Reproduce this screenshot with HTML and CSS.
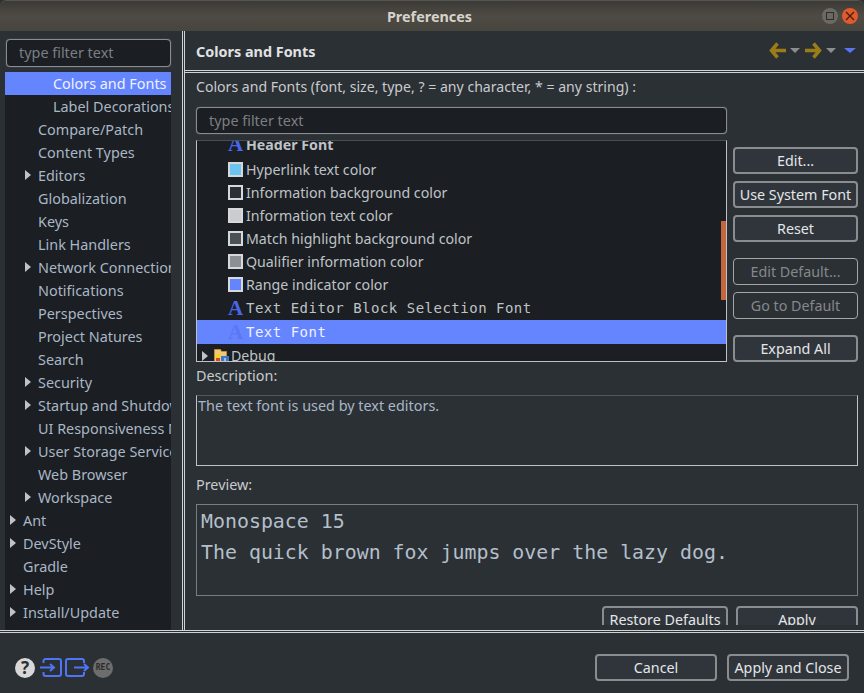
FILE: index.html
```html
<!DOCTYPE html>
<html>
	<head>
		<meta charset="utf-8" />
		<title>Preferences</title>
		<link rel="stylesheet" href="styles.css">
	</head>
	<body>
		<div class="window">
			<div class="titlebar">
				<span class="title">Preferences</span>
				<span class="win-btn win-max"><i></i></span>
				<span class="win-btn win-close">
					<svg width="10" height="10" viewBox="0 0 10 10"><path d="M1 1L9 9M9 1L1 9" stroke="#3a2018" stroke-width="1.3"/></svg>
				</span>
			</div>
			<div class="main">
				<div class="side">
					<div class="filter side-filter">type filter text</div>
					<div class="tree">
						<div class="node lv2 sel">Colors and Fonts</div>
						<div class="node lv2">Label Decorations</div>
						<div class="node lv1">Compare/Patch</div>
						<div class="node lv1">Content Types</div>
						<div class="node lv1 arrow">Editors</div>
						<div class="node lv1">Globalization</div>
						<div class="node lv1">Keys</div>
						<div class="node lv1">Link Handlers</div>
						<div class="node lv1 arrow">Network Connections</div>
						<div class="node lv1">Notifications</div>
						<div class="node lv1">Perspectives</div>
						<div class="node lv1">Project Natures</div>
						<div class="node lv1">Search</div>
						<div class="node lv1 arrow">Security</div>
						<div class="node lv1 arrow">Startup and Shutdown</div>
						<div class="node lv1">UI Responsiveness Monitoring</div>
						<div class="node lv1 arrow">User Storage Service</div>
						<div class="node lv1">Web Browser</div>
						<div class="node lv1 arrow">Workspace</div>
						<div class="node lv0 arrow">Ant</div>
						<div class="node lv0 arrow">DevStyle</div>
						<div class="node lv0">Gradle</div>
						<div class="node lv0 arrow">Help</div>
						<div class="node lv0 arrow">Install/Update</div>
					</div>
				</div>
				<div class="page">
					<div class="page-head">
						<b>Colors and Fonts</b>
						<div class="nav">
							<svg width="17" height="17" viewBox="0 0 17 17"><path d="M8.500 1.500L2.500 8.500l6 7M3.500 8.500H17" fill="none" stroke="#9a7d17" stroke-width="3.500"/></svg>
							<i class="tri"></i>
							<svg width="17" height="17" viewBox="0 0 17 17"><path d="M8.500 1.500L14.500 8.500l-6 7M13.500 8.500H0" fill="none" stroke="#9a7d17" stroke-width="3.500"/></svg>
							<i class="tri"></i>
							<i class="tri blue"></i>
						</div>
					</div>
					<div class="page-body">
						<div class="caption">Colors and Fonts (font, size, type, ? = any character, * = any string) :</div>
						<div class="theme-row">
							<div class="theme-left">
								<div class="filter list-filter">type filter text</div>
								<div class="list">
									<div class="row row-cut"><span class="aa">A</span><b>Header Font</b></div>
									<div class="row"><i class="swatch" style="background:#6cc5f0"></i>Hyperlink text color</div>
									<div class="row"><i class="swatch" style="background:#2b3035"></i>Information background color</div>
									<div class="row"><i class="swatch" style="background:#c9ccd0"></i>Information text color</div>
									<div class="row"><i class="swatch" style="background:#4a5157"></i>Match highlight background color</div>
									<div class="row"><i class="swatch" style="background:#8a9096"></i>Qualifier information color</div>
									<div class="row"><i class="swatch" style="background:#6585ff"></i>Range indicator color</div>
									<div class="row mono"><span class="aa">A</span>Text Editor Block Selection Font</div>
									<div class="row mono cur"><span class="aa">A</span>Text Font</div>
									<div class="row debug"><i class="arrow-ic"></i><svg width="16" height="16" viewBox="0 0 16 16"><path d="M1.500 1.500h6l1 2h5v11h-12z" fill="#f0c878" stroke="#c08a3c"/><rect x="3" y="6" width="4" height="4" fill="#f2d21e"/><rect x="3" y="10" width="4" height="4" fill="#d8452c"/><rect x="8" y="8" width="8" height="8" fill="#3a78c8"/><path d="M12 10v4" stroke="#fff"/></svg><span>Debug</span></div>
									<div class="scroll-mark"></div>
								</div>
							</div>
							<div class="btns">
								<div class="btn">Edit...</div>
								<div class="btn">Use System Font</div>
								<div class="btn">Reset</div>
								<div class="btn off gap-top">Edit Default...</div>
								<div class="btn off">Go to Default</div>
								<div class="btn gap-top btn-last">Expand All</div>
							</div>
						</div>
						<div class="label label-desc">Description:</div>
						<div class="box desc">The text font is used by text editors.</div>
						<div class="label">Preview:</div>
						<div class="box preview">Monospace 15<br>The quick brown fox jumps over the lazy dog.</div>
						<div class="page-btns">
							<div class="btn btn-restore">Restore Defaults</div>
							<div class="btn">Apply</div>
						</div>
					</div>
				</div>
			</div>
			<div class="footer">
				<div class="foot-icons">
					<span class="help">?</span>
					<svg class="ic-in" width="22" height="19" viewBox="0 0 22 19"><path d="M3.500 5V3a2 2 0 0 1 2-2h13.500a2 2 0 0 1 2 2v13a2 2 0 0 1-2 2H5.500a2 2 0 0 1-2-2v-2M0 9.500h13M10 6l4 3.500-4 3.500" fill="none" stroke="#4f74f5" stroke-width="2"/></svg>
					<svg class="ic-out" width="24" height="19" viewBox="0 0 24 19"><path d="M19 5V3a2 2 0 0 0-2-2H3a2 2 0 0 0-2 2v13a2 2 0 0 0 2 2h14a2 2 0 0 0 2-2v-2M9 9.500h13M19 6l4 3.500-4 3.500" fill="none" stroke="#4f74f5" stroke-width="2"/></svg>
					<span class="rec">REC</span>
				</div>
				<div class="foot-btns">
					<div class="btn">Cancel</div>
					<div class="btn">Apply and Close</div>
				</div>
			</div>
		</div>
	</body>
</html>
```

FILE: styles.css
```css
html, body{
	margin: 0;
	height: 100%;
	background: #2b3035;
}
body{
	font: 14.400px "Noto Sans", sans-serif;
	color: #bfc3c7;
	overflow: hidden;
}
.window{
	display: flex;
	flex-direction: column;
	height: 693px;
}
.titlebar{
	height: 31px;
	flex: none;
	display: flex;
	align-items: center;
	justify-content: flex-end;
	gap: 4px;
	padding-right: 6px;
	position: relative;
	background: linear-gradient(#3c3a36, #4e4b44 50%, #47453f);
	border-top: 1px solid #55534d;
	box-sizing: border-box;
	border-radius: 6px 6px 0 0;
}
.title{
	position: absolute;
	left: 0;
	right: 5px;
	text-align: center;
	font-weight: bold;
	color: #d6d3cc;
}
.win-btn{
	width: 16px;
	height: 16px;
	border-radius: 50%;
	display: flex;
	align-items: center;
	justify-content: center;
	position: relative;
}
.win-max{
	background: #6a6963;
}
.win-max i{
	width: 6px;
	height: 6px;
	border: 1px solid #2e2d2a;
}
.win-close{
	background: #e25a2a;
}

.main{
	height: 599px;
	flex: none;
	display: flex;
	border-bottom: 3px double #d0d2d4;
}
.side{
	width: 185px;
	flex: none;
	box-sizing: border-box;
	padding: 8px 0 0 5px;
	border-right: 3px double #d0d2d4;
	overflow: hidden;
}
.filter{
	box-sizing: border-box;
	height: 28px;
	line-height: 25px;
	background: #1b1e22;
	border: 1px solid #8a8d90;
	border-radius: 4px;
	box-shadow: 0 0 1px #8a8d90;
	color: #7b7f83;
	padding-left: 12px;
}
.side-filter{
	width: 165px;
	margin-left: 1px;
}
.tree{
	width: 166px;
	height: 600px;
	margin-top: 5px;
	background: #1b1e22;
	overflow: hidden;
}
.node{
	height: 23px;
	line-height: 23px;
	white-space: nowrap;
	position: relative;
	color: #a9b7c6;
}
.lv0{ padding-left: 18px; }
.lv1{ padding-left: 33px; }
.lv2{ padding-left: 48px; }
.sel{
	background: #6585ff;
	color: #eef1ff;
}
.arrow:before, .arrow-ic{
	content: "";
	position: absolute;
	width: 0;
	height: 0;
	border-left: 6px solid #bfc3c7;
	border-top: 5px solid transparent;
	border-bottom: 5px solid transparent;
	top: 6px;
	left: 20px;
}
.lv0.arrow:before{
	left: 5px;
}

.page{
	flex: 1;
	min-width: 0;
}
.page-head{
	height: 42px;
	box-sizing: border-box;
	padding: 0 8px 0 11px;
	display: flex;
	align-items: center;
	justify-content: space-between;
	border-bottom: 3px double #d0d2d4;
	color: #e0e2e4;
}
.page-head b{
	margin-top: 1px;
}
.nav{
	display: flex;
	align-items: center;
}
.tri{
	width: 0;
	height: 0;
	border-left: 5px solid transparent;
	border-right: 5px solid transparent;
	border-top: 5px solid #8b8d8f;
	margin: 0 5px 0 4px;
}
.tri.blue{
	border-left-width: 6px;
	border-right-width: 6px;
	border-top-color: #5b74f0;
	margin: 0 0 0 3px;
}
.page-body{
	padding: 0 6px 0 11px;
}
.caption{
	height: 34px;
	line-height: 28px;
	font-size: 14.100px;
	color: #c8cbce;
	white-space: nowrap;
}
.theme-row{
	display: flex;
	gap: 6px;
}
.theme-left{
	width: 531px;
	flex: none;
}
.list-filter{
	height: 27px;
	margin-bottom: 6px;
}
.list{
	height: 222px;
	background: #1b1e22;
	border: 1px solid #c0c3c6;
	border-top-color: #4a4e52;
	box-sizing: border-box;
	overflow: hidden;
	position: relative;
	font-size: 14.200px;
}
.row{
	box-sizing: border-box;
	height: 23px;
	line-height: 21px;
	padding: 0 0 2px 31px;
	display: flex;
	align-items: center;
	white-space: nowrap;
	color: #bfc3c7;
}
.row-cut{
	margin-top: -7px;
	margin-bottom: 2px;
}
.swatch{
	box-sizing: border-box;
	width: 15px;
	height: 15px;
	border: 2px solid #d6d8da;
	margin-right: 3px;
	flex: none;
}
.aa{
	width: 18px;
	flex: none;
	font: bold 21px "Liberation Serif", serif;
	color: #4a66e8;
}
.mono{
	font-family: "DejaVu Sans Mono", monospace;
	font-size: 14px;
	letter-spacing: .5px;
	padding-bottom: 0;
}
.cur{
	height: 24px;
	background: #6585ff;
	color: #eef1ff;
}
.cur .aa{
	color: #5a78f5;
}
.debug{
	padding: 0 0 0 5px;
	position: relative;
}
.debug svg{
	margin: 0 2px 0 5px;
}
.arrow-ic{
	position: static;
	margin-right: 0;
}
.scroll-mark{
	position: absolute;
	right: 0;
	top: 80px;
	width: 5px;
	height: 79px;
	background: #c2673f;
}
.btns{
	padding-top: 40px;
	width: 125px;
	flex: none;
}
.btn{
	box-sizing: border-box;
	height: 27px;
	line-height: 23px;
	margin-bottom: 7px;
	text-align: center;
	border: 2px solid #8a8d90;
	border-radius: 4px;
	background: #2f353b;
	color: #e4e6e8;
	white-space: nowrap;
	font-size: 14.300px;
}
.btn.off{
	border: 1px solid #a4a7aa;
	line-height: 25px;
	color: #85888b;
	background: #2b3035;
}
.gap-top{
	margin-top: 16px;
}
.btn-last{
	margin-bottom: 0;
}
.label{
	height: 38px;
	line-height: 38px;
	color: #c8cbce;
}
.label-desc{
	height: 33px;
	line-height: 28px;
}
.box{
	width: 662px;
	box-sizing: border-box;
	border: 1px solid #c0c3c6;
	border-top-color: #55585b;
	background: #2b3035;
}
.desc{
	height: 71px;
	padding: 0 0 0 1px;
	line-height: 20px;
	color: #a9b7c6;
}
.preview{
	height: 92px;
	padding: 1px 4px;
	border-color: #7a7d80;
	font: 19.900px/31px "DejaVu Sans Mono", monospace;
	color: #b4bfca;
}
.page-btns{
	display: flex;
	justify-content: flex-end;
	gap: 8px;
	height: 19px;
	margin-top: 10px;
	width: 662px;
	overflow: hidden;
}
.page-btns .btn{
	width: 122px;
	height: 27px;
	flex: none;
}
.page-btns .btn-restore{
	width: 126px;
}
.footer{
	flex: 1;
	display: flex;
	align-items: center;
	justify-content: space-between;
	padding: 9px 15px 0 15px;
}
.foot-icons{
	display: flex;
	align-items: center;
}
.ic-in{
	margin-left: 5px;
}
.ic-out{
	margin-left: 3px;
}
.help{
	width: 20px;
	height: 20px;
	border-radius: 50%;
	background: #d8d8d8;
	color: #2b3035;
	font-weight: bold;
	font-size: 17px;
	text-align: center;
	line-height: 20px;
}
.rec{
	width: 20px;
	height: 20px;
	border-radius: 50%;
	background: #6d6d6d;
	color: #2b2b2b;
	font: bold 8px/20px "DejaVu Sans Mono", monospace;
	text-align: center;
	margin-left: 4px;
}
.foot-btns{
	display: flex;
	gap: 10px;
}
.foot-btns .btn{
	width: 122px;
	margin: 0;
}
```
